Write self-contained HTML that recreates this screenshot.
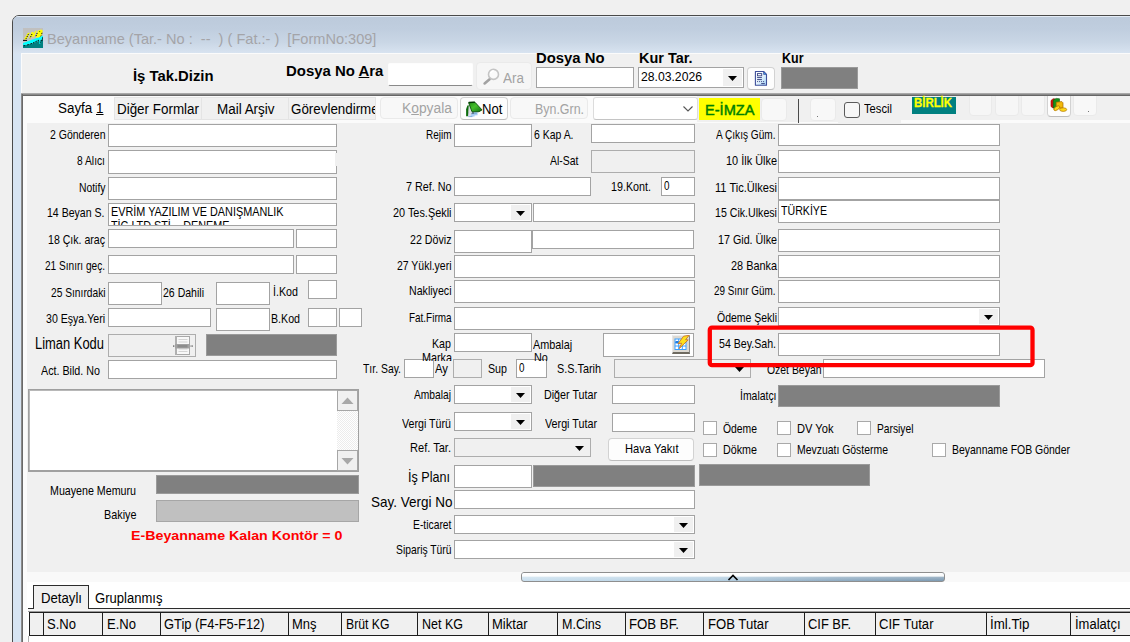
<!DOCTYPE html>
<html lang="tr">
<head>
<meta charset="utf-8">
<title>Beyanname</title>
<style>
html,body{margin:0;padding:0;}
body{width:1130px;height:642px;overflow:hidden;background:#f0f0f0;position:relative;font-family:"Liberation Sans",sans-serif;color:#000;}
div,span{box-sizing:border-box;}
.a,.i,.d,.g,.g2,.m,.fb,.wb,.ta,.cb,.t{position:absolute;}
.t{white-space:pre;transform-origin:0 0;display:block;}
.i{background:#fff;border:1px solid #a3a3a3;}
.d{background:#f0f0f0;border:1px solid #adadad;}
.g{background:#808080;border:1px solid #9a9a9a;}
.g2{background:#c0c0c0;border:1px solid #a6a6a6;}
.m{background:#fff;border:1px solid #fdfdfd;border-bottom:1px solid #8a8a8a;border-radius:2px;}
.fb{background:#f6f6f6;border:1px solid #eaeaea;border-radius:4px;}
.wb{background:#fdfdfd;border:1px solid #d2d2d2;border-bottom-color:#bdbdbd;border-radius:4px;}
.ta{background:#fff;border:1px solid #a0a0a0;border-bottom-width:2px;box-shadow:inset 1px 1px 0 #b8b8b8;}
.cb{background:#fff;border:1px solid #a9a9a9;}
.ab{position:absolute;right:1px;top:1px;bottom:1px;width:19px;background:#f0f0f0;}
.ab svg{position:absolute;left:5px;top:50%;margin-top:-2px;}
.tab{position:absolute;top:97px;height:23px;background:#f0f0f0;border:1px solid #e4e4e4;}
.hc{position:absolute;top:611px;height:25px;background:#f0f0f0;border:1px solid #222;border-left-width:1px;}
</style>
</head>
<body>
<!-- window chrome -->
<div class="a" style="left:12px;top:15px;width:1130px;height:640px;border:1px solid #4a4a4a;border-radius:7px 0 0 0;background:#d7e4f2;overflow:hidden;">
  <div class="a" style="left:0;top:0;width:1130px;height:38px;background:linear-gradient(#bccadb 0%,#c0cedf 35%,#c9d6e5 68%,#d9e4f1 100%);"></div>
  <div class="a" style="left:0;top:0;width:1130px;height:1px;background:#e4ecf6;"></div>
</div>
<!-- app icon -->
<svg class="a" style="left:23px;top:28px" width="20" height="20" viewBox="0 0 20 20">
  <rect width="20" height="20" fill="#c0c0c0"/>
  <path d="M0 17 L5 16.4 11 14.8 17 12.3 20 10.5 V20 H0z" fill="#008080"/>
  <path d="M0 15 L20 7.7 V10.5 L17 12.3 11 14.8 5 16.4 0 17z" fill="#00ffff"/>
  <path d="M16.4 11.5h.8v4.6h-.8z" fill="#00ffff"/>
  <path d="M1 11.6L4.6 5.2l2.2-.6L3.4 11.4zM5.8 10.6L8.6 4.2l1.8-.5.3 2.2 1.6-3 1.4-.3L11 9l-1.4.5-.4-2.6-1.6 3.4zM12.6 9.2l2.4-6.4 3-1.2 1.6.6-.2 2.2-1.2 3.6-2.6 1.6z" fill="#ffff00"/>
  <path d="M0 12.4h4" stroke="#000" stroke-width="1"/>
  <path d="M5.4 6.2L3 10.8M9 6L7 10.2M14.2 5l-1.6 4M17 3.2l-.6.6M19 4.8l-.4 1.4M18.4 7.4l-1 .8" stroke="#000" stroke-width="1" stroke-dasharray="1.1 1" fill="none"/>
  <path d="M.8 17.8l1-.2M4.2 16.9l1.6-.4M7.4 15.9l1.5-.5M10 14.9l1.5-.6M12.4 13.7l1.5-.6M14.6 12.7l1.4-.5" stroke="#000" stroke-width=".9" fill="none"/>
  <path d="M19.6 9.4c.2 1.5-.6 3.4-2 5" stroke="#000" stroke-width="1" stroke-dasharray="1.4 1" fill="none"/>
</svg>
<!-- client area -->
<div class="a" style="left:21px;top:53px;width:1110px;height:600px;background:#f0f0f0;border-left:1px solid #fbfbfb;border-top:1px solid #fbfbfb;"></div>
<!-- tab control frame -->
<div class="a" style="left:22px;top:93px;width:1110px;height:560px;background:#fbfbfb;"></div>
<div class="a" style="left:21px;top:93px;width:1110px;height:3px;background:linear-gradient(#a9a9a9 0,#a9a9a9 33%,#8a8a8a 33%,#8a8a8a 66%,#666 66%,#666 100%);"></div>
<div class="a" style="left:21px;top:94px;width:2px;height:560px;background:linear-gradient(90deg,#8a8a8a 0,#8a8a8a 50%,#696969 50%);"></div>
<!-- strip right part gray -->
<div class="a" style="left:697px;top:96px;width:141px;height:26px;background:#f0f0f0;"></div>
<div class="a" style="left:901px;top:96px;width:240px;height:24px;background:#f0f0f0;"></div>
<div class="a" style="left:838px;top:96px;width:63px;height:27px;background:#f0f0f0;"></div>
<!-- form panel -->
<div class="a" style="left:27px;top:123px;width:1110px;height:449px;background:#f0f0f0;"></div>
<!-- splitter strip -->
<div class="a" style="left:27px;top:572px;width:1110px;height:10px;background:#f9f9f9;"></div>
<div class="a" style="left:27px;top:582px;width:1110px;height:70px;background:#fff;"></div>
<div class="a" style="left:521px;top:572px;width:424px;height:10px;border:1px solid #8e8e8e;border-radius:3px;background:linear-gradient(90deg,#c9dfee 0%,#b4cfe2 45%,#8eabc2 75%,#7c9ab2 100%);overflow:hidden;">
  <div class="a" style="left:0;top:0;width:100%;height:100%;background:linear-gradient(#fff 0%,rgba(255,255,255,.95) 38%,rgba(255,255,255,.25) 55%,rgba(255,255,255,0) 100%);"></div>
</div>
<svg class="a" style="left:727px;top:574px" width="12" height="7" viewBox="0 0 12 7"><path d="M1.5 6L6 1.5 10.5 6" fill="none" stroke="#000" stroke-width="1.6"/></svg>

<div class="m" style="left:388px;top:63px;width:85px;height:23px;"></div>
<div class="fb" style="left:476px;top:62px;width:56px;height:28px;"></div>
<div class="i" style="left:536px;top:67px;width:98px;height:21px;"></div>
<div class="i" style="left:638px;top:67px;width:106px;height:21px;"><div class="ab"><svg width="9" height="5" viewBox="0 0 9 5"><path d="M0 0h9L4.5 5z" fill="#000"/></svg></div></div>
<div class="wb" style="left:747px;top:67px;width:28px;height:23px;"></div>
<div class="g" style="left:781px;top:67px;width:77px;height:22px;"></div>
<div class="i" style="left:108px;top:124px;width:229px;height:23px;"></div>
<div class="i" style="left:108px;top:150px;width:229px;height:24px;"></div>
<div class="i" style="left:108px;top:177px;width:229px;height:23px;"></div>
<div class="i" style="left:108px;top:203px;width:229px;height:23px;"></div>
<div class="i" style="left:108px;top:360px;width:229px;height:19px;"></div>
<div class="i" style="left:108px;top:229px;width:186px;height:19px;"></div>
<div class="i" style="left:296px;top:229px;width:41px;height:19px;"></div>
<div class="i" style="left:108px;top:255px;width:186px;height:19px;"></div>
<div class="i" style="left:296px;top:255px;width:41px;height:19px;"></div>
<div class="i" style="left:108px;top:282px;width:54px;height:23px;"></div>
<div class="i" style="left:216px;top:282px;width:54px;height:23px;"></div>
<div class="i" style="left:308px;top:280px;width:29px;height:19px;"></div>
<div class="i" style="left:108px;top:308px;width:103px;height:19px;"></div>
<div class="i" style="left:216px;top:308px;width:54px;height:23px;"></div>
<div class="i" style="left:308px;top:308px;width:29px;height:19px;"></div>
<div class="i" style="left:339px;top:308px;width:23px;height:19px;"></div>
<div class="d" style="left:108px;top:334px;width:88px;height:23px;"></div>
<div class="g" style="left:206px;top:334px;width:131px;height:22px;"></div>
<div class="ta" style="left:28px;top:389px;width:331px;height:83px;"></div>
<div class="g" style="left:156px;top:475px;width:203px;height:19px;"></div>
<div class="g2" style="left:156px;top:500px;width:203px;height:22px;"></div>
<div class="i" style="left:454px;top:124px;width:78px;height:23px;"></div>
<div class="i" style="left:591px;top:124px;width:104px;height:19px;"></div>
<div class="d" style="left:591px;top:150px;width:104px;height:23px;"></div>
<div class="i" style="left:454px;top:177px;width:137px;height:19px;"></div>
<div class="i" style="left:661px;top:177px;width:34px;height:19px;"></div>
<div class="i" style="left:454px;top:203px;width:78px;height:19px;"><div class="ab"><svg width="9" height="5" viewBox="0 0 9 5"><path d="M0 0h9L4.5 5z" fill="#000"/></svg></div></div>
<div class="i" style="left:533px;top:203px;width:162px;height:19px;"></div>
<div class="i" style="left:532px;top:230px;width:162px;height:19px;"></div>
<div class="i" style="left:454px;top:230px;width:78px;height:23px;"></div>
<div class="i" style="left:454px;top:255px;width:241px;height:23px;"></div>
<div class="i" style="left:454px;top:280px;width:241px;height:23px;"></div>
<div class="i" style="left:454px;top:307px;width:241px;height:23px;"></div>
<div class="i" style="left:454px;top:333px;width:78px;height:19px;"></div>
<div class="i" style="left:603px;top:333px;width:91px;height:24px;"></div>
<div class="i" style="left:404px;top:359px;width:30px;height:19px;"></div>
<div class="d" style="left:453px;top:359px;width:29px;height:19px;"></div>
<div class="i" style="left:516px;top:359px;width:31px;height:19px;"></div>
<div class="d" style="left:614px;top:359px;width:137px;height:19px;"><div class="ab" style="background:transparent"><svg width="9" height="5" viewBox="0 0 9 5"><path d="M0 0h9L4.5 5z" fill="#000"/></svg></div></div>
<div class="i" style="left:454px;top:385px;width:78px;height:19px;"><div class="ab"><svg width="9" height="5" viewBox="0 0 9 5"><path d="M0 0h9L4.5 5z" fill="#000"/></svg></div></div>
<div class="i" style="left:612px;top:385px;width:83px;height:19px;"></div>
<div class="i" style="left:454px;top:412px;width:78px;height:19px;"><div class="ab"><svg width="9" height="5" viewBox="0 0 9 5"><path d="M0 0h9L4.5 5z" fill="#000"/></svg></div></div>
<div class="i" style="left:612px;top:413px;width:83px;height:19px;"></div>
<div class="d" style="left:454px;top:438px;width:137px;height:19px;"><div class="ab" style="background:transparent"><svg width="9" height="5" viewBox="0 0 9 5"><path d="M0 0h9L4.5 5z" fill="#000"/></svg></div></div>
<div class="wb" style="left:608px;top:438px;width:86px;height:23px;"></div>
<div class="i" style="left:454px;top:465px;width:78px;height:23px;"></div>
<div class="g" style="left:533px;top:465px;width:162px;height:22px;"></div>
<div class="i" style="left:454px;top:490px;width:241px;height:19px;"></div>
<div class="i" style="left:454px;top:515px;width:241px;height:19px;"><div class="ab"><svg width="9" height="5" viewBox="0 0 9 5"><path d="M0 0h9L4.5 5z" fill="#000"/></svg></div></div>
<div class="i" style="left:454px;top:540px;width:241px;height:19px;"><div class="ab"><svg width="9" height="5" viewBox="0 0 9 5"><path d="M0 0h9L4.5 5z" fill="#000"/></svg></div></div>
<div class="i" style="left:778px;top:124px;width:222px;height:22px;"></div>
<div class="i" style="left:778px;top:150px;width:222px;height:23px;"></div>
<div class="i" style="left:778px;top:177px;width:222px;height:23px;"></div>
<div class="i" style="left:778px;top:200px;width:222px;height:23px;"></div>
<div class="i" style="left:778px;top:229px;width:222px;height:23px;"></div>
<div class="i" style="left:778px;top:255px;width:222px;height:23px;"></div>
<div class="i" style="left:778px;top:280px;width:222px;height:23px;"></div>
<div class="i" style="left:778px;top:333px;width:222px;height:23px;"></div>
<div class="i" style="left:778px;top:307px;width:222px;height:19px;"><div class="ab"><svg width="9" height="5" viewBox="0 0 9 5"><path d="M0 0h9L4.5 5z" fill="#000"/></svg></div></div>
<div class="i" style="left:823px;top:359px;width:222px;height:19px;"></div>
<div class="g" style="left:778px;top:385px;width:222px;height:22px;"></div>
<div class="cb" style="left:703px;top:421px;width:14px;height:14px;"></div>
<div class="cb" style="left:777px;top:421px;width:14px;height:14px;"></div>
<div class="cb" style="left:857px;top:421px;width:14px;height:14px;"></div>
<div class="cb" style="left:703px;top:443px;width:14px;height:14px;"></div>
<div class="cb" style="left:777px;top:443px;width:14px;height:14px;"></div>
<div class="cb" style="left:932px;top:443px;width:14px;height:14px;"></div>
<div class="g" style="left:699px;top:464px;width:171px;height:22px;"></div>
<!-- strip tabs & buttons -->
<div class="tab" style="left:114px;width:88px;"></div>
<div class="tab" style="left:201px;width:88px;"></div>
<div class="tab" style="left:288px;width:88px;overflow:hidden;"><span class="a" style="left:1.8px;top:4px;font-size:14px;line-height:14px;white-space:pre;transform:scaleX(.955);transform-origin:0 0;">Görevlendirme</span></div>
<div class="fb" style="left:380px;top:97px;width:78px;height:22px;background:#f8f8f8;"></div>
<div class="wb" style="left:460px;top:97px;width:48px;height:23px;"></div>
<div class="fb" style="left:510px;top:97px;width:78px;height:22px;background:#f8f8f8;"></div>
<div class="a" style="left:593px;top:97px;width:105px;height:23px;background:#fff;border:1px solid #dcdcdc;border-bottom-color:#c4c4c4;border-radius:3px;"></div>
<svg class="a" style="left:682px;top:105px" width="12" height="8" viewBox="0 0 12 8"><path d="M1.5 1.5L6 6 10.5 1.5" fill="none" stroke="#555" stroke-width="1.1"/></svg>
<div class="a" style="left:699px;top:98px;width:61px;height:22px;background:#ffff00;"></div>
<div class="fb" style="left:761px;top:98px;width:26px;height:23px;background:#f8f8f8;"></div>
<div class="a" style="left:798px;top:99px;width:1px;height:24px;background:#4a4a4a;"></div>
<div class="fb" style="left:810px;top:98px;width:26px;height:23px;background:#f8f8f8;"></div>
<div class="a" style="left:817px;top:116px;width:1px;height:1px;background:#777;"></div>
<div class="a" style="left:844px;top:102px;width:16px;height:16px;background:#f6f6f6;border:1px solid #5a5a5a;border-radius:3px;"></div>
<div class="a" style="left:912px;top:97px;width:44px;height:17px;background:#008080;"></div>
<div class="fb" style="left:969px;top:92px;width:23px;height:24px;background:#f6f6f6;"></div>
<div class="fb" style="left:995px;top:92px;width:24px;height:24px;background:#f6f6f6;"></div>
<div class="fb" style="left:1021px;top:92px;width:24px;height:24px;background:#f6f6f6;"></div>
<div class="wb" style="left:1047px;top:92px;width:24px;height:25px;"></div>
<div class="fb" style="left:1073px;top:92px;width:24px;height:24px;background:#f8f8f8;"></div>
<div class="a" style="left:1088px;top:111px;width:1px;height:1px;background:#777;"></div>
<!-- redraw dark line over clipped buttons -->
<div class="a" style="left:900px;top:92px;width:240px;height:1px;background:#f0f0f0;"></div>
<div class="a" style="left:900px;top:93px;width:240px;height:3px;background:linear-gradient(#a9a9a9 0,#a9a9a9 33%,#8a8a8a 33%,#8a8a8a 66%,#666 66%,#666 100%);"></div>

<!-- icons in strip -->
<!-- magnifier -->
<svg class="a" style="left:482px;top:66px" width="20" height="20" viewBox="0 0 20 20">
  <path d="M7.6 13.2L2.6 17.4" stroke="#a2a2a2" stroke-width="2.6" stroke-linecap="round"/>
  <circle cx="11.5" cy="8.4" r="5" fill="#fafafa" stroke="#c4c4c4" stroke-width="1.6"/>
  <path d="M8.6 7.2a3.4 3.4 0 0 1 3.2-2.4" stroke="#fff" stroke-width="1.4" fill="none"/>
</svg>
<!-- Not icon -->
<svg class="a" style="left:465px;top:101px" width="18" height="17" viewBox="0 0 18 17">
  <defs><linearGradient id="ng" x1="0" y1="0" x2="1" y2="1"><stop offset="0" stop-color="#1d8a14"/><stop offset=".45" stop-color="#46c02c"/><stop offset="1" stop-color="#0d6f10"/></linearGradient></defs>
  <path d="M3 11.2l9.6-.6v3.6l-3 .4v.8L3.4 16z" fill="#a9cdf3"/>
  <path d="M5.2 12.6h6.6M3.4 15.6h4" stroke="#6f9fd2" stroke-width=".8"/>
  <path d="M6.6 12h2.4" stroke="#3d3d3d" stroke-width=".9"/>
  <path d="M4.3 4.6L3.2 15.2h2.2l1.3-4z" fill="#dedee6"/>
  <path d="M4.3 4.6L3.2 15.2" stroke="#b8b8c2" stroke-width=".6"/>
  <path d="M1.1 8.2l1.3-3.6 1.4-.4-.9 11H1.1z" fill="#0b6b0b"/>
  <path d="M3.6 1.6l6.4-.3 7 7.6-3 1.8-7 .1z" fill="url(#ng)" stroke="#064d06" stroke-width=".9" stroke-linejoin="round"/>
  <path d="M3.8 1.5l6-.3" stroke="#033803" stroke-width="1.3"/>
</svg>
<!-- doc icon -->
<svg class="a" style="left:754px;top:70px" width="14" height="17" viewBox="0 0 14 17">
  <defs><linearGradient id="dg" x1="0" y1="0" x2="1" y2="1"><stop offset="0" stop-color="#ffffff"/><stop offset=".45" stop-color="#eaf5fd"/><stop offset="1" stop-color="#9fd2f6"/></linearGradient></defs>
  <path d="M1.4 1.5h8.2l2.9 2.9v10.9H1.4z" fill="url(#dg)" stroke="#3f4f9a" stroke-width="1.1" stroke-linejoin="round"/>
  <path d="M9.6 1.5v2.9h2.9z" fill="#3a9cf0" stroke="#3f4f9a" stroke-width=".7"/>
  <rect x="3.5" y="3.6" width="4.2" height="2.2" fill="#fff" stroke="#3b4684" stroke-width=".9"/>
  <path d="M3.1 7.6h4.8M3.1 9.6h4.8M7.2 13.6h3.6" stroke="#3b4684" stroke-width="1"/>
  <path d="M3.1 11.6h7" stroke="#3b4684" stroke-width="1" stroke-dasharray="1 1"/>
</svg>
<!-- coins icon -->
<svg class="a" style="left:1050px;top:97px" width="18" height="16" viewBox="0 0 18 16">
  <path d="M1 3.5l2.2-1.8 2 .3v8.5L3 11 1 9.5z" fill="#e01010" stroke="#900" stroke-width=".6"/>
  <path d="M3.2 3l3-1.6 3.3.4v8.8L6 12.4l-2.8-1.6z" fill="#14921a" stroke="#0a5a0e" stroke-width=".6"/>
  <path d="M6.2 5.2l5.6-.6 1.2 1.2v5l-4 .4-2.8-.4z" fill="#f2b90c" stroke="#a86a00" stroke-width=".7"/>
  <ellipse cx="6.8" cy="11.2" rx="3.4" ry="1.7" transform="rotate(-32 6.8 11.2)" fill="#ffd91a" stroke="#b07400" stroke-width=".7"/>
  <ellipse cx="13.2" cy="12.6" rx="3.5" ry="1.8" fill="#ffd91a" stroke="#b07400" stroke-width=".7"/>
</svg>


<div class="a" style="left:335px;top:153px;width:3px;height:13px;background:#f0f0f0;"></div>
<!-- Liman Kodu icon -->
<svg class="a" style="left:172px;top:336px" width="22" height="19" viewBox="0 0 22 19">
  <rect x="3.5" y=".5" width="14" height="18" fill="#f8f8f8" stroke="#a8a8a8"/>
  <rect x="3" y="0" width="2" height="19" fill="#b0b0b0"/>
  <path d="M6.5 3.5h9M6.5 6h9M6.5 13h9M6.5 15.5h9" stroke="#d4d4d4" stroke-width="1"/>
  <rect x="3" y="8" width="15" height="4.5" fill="#a2a2a2"/>
  <rect x="5.5" y="9" width="10" height="2.5" fill="#8c8c8c"/>
  <rect x="1" y="9.3" width="1.4" height="1.6" fill="#777"/><rect x="19.4" y="9.3" width="1.4" height="1.6" fill="#777"/>
  <rect x="18" y="9.3" width="1.4" height="1.6" fill="#bbb"/>
</svg>
<!-- textarea scrollbar -->
<div class="a" style="left:337px;top:390px;width:21px;height:81px;background:#f9f9f9;background-image:repeating-conic-gradient(#ececec 0 25%,#fff 0 50%);background-size:2px 2px;"></div>
<div class="a" style="left:337px;top:390px;width:21px;height:21px;background:#f0f0f0;border:1px solid #a6a6a6;"></div>
<div class="a" style="left:337px;top:450px;width:21px;height:21px;background:#f0f0f0;border:1px solid #a6a6a6;"></div>
<svg class="a" style="left:341px;top:397px" width="13" height="7" viewBox="0 0 13 7"><path d="M0.5 7L6.5 0.5 12.5 7z" fill="#a8a8a8"/></svg>
<svg class="a" style="left:341px;top:458px" width="13" height="7" viewBox="0 0 13 7"><path d="M0.5 0L6.5 6.5 12.5 0z" fill="#a8a8a8"/></svg>
<!-- lightning button -->
<div class="a" style="left:672px;top:335px;width:18px;height:19px;background:#dcd9d2;border-top:1px solid #eeeeee;border-left:1px solid #e6e6e6;border-right:1px solid #8a8a8a;border-bottom:2px solid #6e6a60;"></div>
<svg class="a" style="left:673px;top:335px" width="17" height="17" viewBox="0 0 17 17">
  <rect x="2" y="4" width="11" height="10.5" fill="#fff" stroke="#3aa0ff" stroke-width="1"/>
  <path d="M2 7.6h11M2 11h11M5.7 4v10.5M9.3 4v10.5" stroke="#3aa0ff" stroke-width="1"/>
  <rect x="2.5" y="6" width="3" height="2.4" fill="#1e7be0"/>
  <path d="M10.6 1.2l5.6-.9-3.6 4.4 2.6.2L6.2 13.6l2.4-5.4-3.6.5z" fill="#ffe11a" stroke="#c8742a" stroke-width=".9" stroke-linejoin="round"/>
</svg>
<!-- clipped second lines -->
<div class="a" style="left:109px;top:218px;width:226px;height:7px;overflow:hidden;"><span class="a" style="left:1.5px;top:1px;font-size:13px;line-height:13px;white-space:pre;transform:scaleX(.83);transform-origin:0 0;">TİC.LTD.ŞTİ. - DENEME</span></div>
<div class="a" style="left:415px;top:351px;width:40px;height:10px;overflow:hidden;"><span class="a" style="left:6.5px;top:0px;font-size:13px;line-height:13px;white-space:pre;transform:scaleX(.83);transform-origin:0 0;">Marka</span></div>
<div class="a" style="left:533px;top:351px;width:30px;height:10px;overflow:hidden;"><span class="a" style="left:0.5px;top:0px;font-size:13px;line-height:13px;white-space:pre;transform:scaleX(.83);transform-origin:0 0;">No</span></div>
<span class="t" style="left:533px;top:337.5px;font-size:13px;line-height:13px;transform:scaleX(.835);">Ambalaj</span>

<!-- grid tabs -->
<div class="a" style="left:28px;top:608px;width:1110px;height:1px;background:#2c2c2c;"></div>
<div class="a" style="left:28px;top:609px;width:1110px;height:3px;background:#f3f3f3;"></div>
<div class="a" style="left:33px;top:585px;width:56px;height:24px;background:#f0f0f0;border:1px solid #2c2c2c;border-bottom:none;"></div>
<!-- grid header -->
<div class="a" style="left:29px;top:612px;width:1110px;height:24px;background:#f0f0f0;border-top:1px solid #1e1e1e;border-bottom:1px solid #1e1e1e;border-left:1px solid #1e1e1e;"></div>
<div class="a" style="left:28px;top:611px;width:1110px;height:1px;background:#9a9a9a;"></div>
<div class="a" style="left:43px;top:613px;width:1px;height:22px;background:#1e1e1e;"></div><div class="a" style="left:102px;top:613px;width:1px;height:22px;background:#1e1e1e;"></div><div class="a" style="left:160px;top:613px;width:1px;height:22px;background:#1e1e1e;"></div><div class="a" style="left:288px;top:613px;width:1px;height:22px;background:#1e1e1e;"></div><div class="a" style="left:341px;top:613px;width:1px;height:22px;background:#1e1e1e;"></div><div class="a" style="left:417px;top:613px;width:1px;height:22px;background:#1e1e1e;"></div><div class="a" style="left:488px;top:613px;width:1px;height:22px;background:#1e1e1e;"></div><div class="a" style="left:557px;top:613px;width:1px;height:22px;background:#1e1e1e;"></div><div class="a" style="left:625px;top:613px;width:1px;height:22px;background:#1e1e1e;"></div><div class="a" style="left:703px;top:613px;width:1px;height:22px;background:#1e1e1e;"></div><div class="a" style="left:804px;top:613px;width:1px;height:22px;background:#1e1e1e;"></div><div class="a" style="left:875px;top:613px;width:1px;height:22px;background:#1e1e1e;"></div><div class="a" style="left:986px;top:613px;width:1px;height:22px;background:#1e1e1e;"></div><div class="a" style="left:1070px;top:613px;width:1px;height:22px;background:#1e1e1e;"></div>
<div class="a" style="left:27px;top:636px;width:1110px;height:10px;background:#fff;"></div>
<div class="a" style="left:28px;top:636px;width:1px;height:10px;background:#b0b0b0;"></div>

<span class="t" style="left:49.5px;top:128.1px;font-size:13px;line-height:13px;transform:scaleX(0.808);">2 Gönderen</span>
<span class="t" style="left:77.0px;top:153.7px;font-size:13px;line-height:13px;transform:scaleX(0.790);">8 Alıcı</span>
<span class="t" style="left:78.5px;top:180.7px;font-size:13px;line-height:13px;transform:scaleX(0.797);">Notify</span>
<span class="t" style="left:47.0px;top:206.2px;font-size:13px;line-height:13px;transform:scaleX(0.812);">14 Beyan S.</span>
<span class="t" style="left:48.0px;top:232.7px;font-size:13px;line-height:13px;transform:scaleX(0.813);">18 Çık. araç</span>
<span class="t" style="left:44.5px;top:258.7px;font-size:13px;line-height:13px;transform:scaleX(0.776);">21 Sınırı geç.</span>
<span class="t" style="left:50.5px;top:285.7px;font-size:13px;line-height:13px;transform:scaleX(0.786);">25 Sınırdaki</span>
<span class="t" style="left:163.0px;top:285.7px;font-size:13px;line-height:13px;transform:scaleX(0.810);">26 Dahili</span>
<span class="t" style="left:273.0px;top:284.7px;font-size:13px;line-height:13px;transform:scaleX(0.823);">İ.Kod</span>
<span class="t" style="left:46.0px;top:311.7px;font-size:13px;line-height:13px;transform:scaleX(0.814);">30 Eşya.Yeri</span>
<span class="t" style="left:271.0px;top:311.7px;font-size:13px;line-height:13px;transform:scaleX(0.819);">B.Kod</span>
<span class="t" style="left:35.0px;top:335.8px;font-size:16px;line-height:16px;transform:scaleX(0.808);">Liman Kodu</span>
<span class="t" style="left:41.0px;top:363.7px;font-size:13px;line-height:13px;transform:scaleX(0.825);">Act. Bild. No</span>
<span class="t" style="left:50.0px;top:483.7px;font-size:13px;line-height:13px;transform:scaleX(0.821);">Muayene Memuru</span>
<span class="t" style="left:103.5px;top:507.7px;font-size:13px;line-height:13px;transform:scaleX(0.833);">Bakiye</span>
<span class="t" style="left:425.5px;top:127.7px;font-size:13px;line-height:13px;transform:scaleX(0.767);">Rejim</span>
<span class="t" style="left:533.5px;top:127.7px;font-size:13px;line-height:13px;transform:scaleX(0.804);">6 Kap A.</span>
<span class="t" style="left:549.5px;top:153.7px;font-size:13px;line-height:13px;transform:scaleX(0.805);">Al-Sat</span>
<span class="t" style="left:405.5px;top:180.2px;font-size:13px;line-height:13px;transform:scaleX(0.828);">7 Ref. No</span>
<span class="t" style="left:611.0px;top:180.2px;font-size:13px;line-height:13px;transform:scaleX(0.826);">19.Kont.</span>
<span class="t" style="left:392.5px;top:206.2px;font-size:13px;line-height:13px;transform:scaleX(0.837);">20 Tes.Şekli</span>
<span class="t" style="left:409.5px;top:232.7px;font-size:13px;line-height:13px;transform:scaleX(0.821);">22 Döviz</span>
<span class="t" style="left:396.5px;top:258.7px;font-size:13px;line-height:13px;transform:scaleX(0.805);">27 Yükl.yeri</span>
<span class="t" style="left:408.5px;top:283.7px;font-size:13px;line-height:13px;transform:scaleX(0.817);">Nakliyeci</span>
<span class="t" style="left:408.5px;top:310.7px;font-size:13px;line-height:13px;transform:scaleX(0.764);">Fat.Firma</span>
<span class="t" style="left:432.0px;top:336.7px;font-size:13px;line-height:13px;transform:scaleX(0.821);">Kap</span>
<span class="t" style="left:363.0px;top:362.2px;font-size:13px;line-height:13px;transform:scaleX(0.801);">Tır. Say.</span>
<span class="t" style="left:435.0px;top:362.2px;font-size:13px;line-height:13px;transform:scaleX(0.870);">Ay</span>
<span class="t" style="left:487.5px;top:362.2px;font-size:13px;line-height:13px;transform:scaleX(0.821);">Sup</span>
<span class="t" style="left:556.5px;top:362.2px;font-size:13px;line-height:13px;transform:scaleX(0.834);">S.S.Tarih</span>
<span class="t" style="left:414.0px;top:388.2px;font-size:13px;line-height:13px;transform:scaleX(0.788);">Ambalaj</span>
<span class="t" style="left:543.5px;top:388.2px;font-size:13px;line-height:13px;transform:scaleX(0.824);">Diğer Tutar</span>
<span class="t" style="left:402.0px;top:416.6px;font-size:13px;line-height:13px;transform:scaleX(0.820);">Vergi Türü</span>
<span class="t" style="left:545.0px;top:416.6px;font-size:13px;line-height:13px;transform:scaleX(0.827);">Vergi Tutar</span>
<span class="t" style="left:409.5px;top:440.7px;font-size:13px;line-height:13px;transform:scaleX(0.851);">Ref. Tar.</span>
<span class="t" style="left:408.0px;top:469.2px;font-size:15px;line-height:15px;transform:scaleX(0.839);">İş Planı</span>
<span class="t" style="left:370.5px;top:494.2px;font-size:15px;line-height:15px;transform:scaleX(0.899);">Say. Vergi No</span>
<span class="t" style="left:412.5px;top:517.7px;font-size:13px;line-height:13px;transform:scaleX(0.795);">E-ticaret</span>
<span class="t" style="left:395.5px;top:542.7px;font-size:13px;line-height:13px;transform:scaleX(0.795);">Sipariş Türü</span>
<span class="t" style="left:716.0px;top:127.7px;font-size:13px;line-height:13px;transform:scaleX(0.777);">A Çıkış Güm.</span>
<span class="t" style="left:725.5px;top:153.7px;font-size:13px;line-height:13px;transform:scaleX(0.840);">10 İlk Ülke</span>
<span class="t" style="left:714.5px;top:180.7px;font-size:13px;line-height:13px;transform:scaleX(0.852);">11 Tic.Ülkesi</span>
<span class="t" style="left:714.5px;top:206.2px;font-size:13px;line-height:13px;transform:scaleX(0.817);">15 Cik.Ulkesi</span>
<span class="t" style="left:717.5px;top:232.7px;font-size:13px;line-height:13px;transform:scaleX(0.825);">17 Gid. Ülke</span>
<span class="t" style="left:730.5px;top:258.7px;font-size:13px;line-height:13px;transform:scaleX(0.837);">28 Banka</span>
<span class="t" style="left:714.0px;top:283.7px;font-size:13px;line-height:13px;transform:scaleX(0.760);">29 Sınır Güm.</span>
<span class="t" style="left:716.5px;top:310.7px;font-size:13px;line-height:13px;transform:scaleX(0.806);">Ödeme Şekli</span>
<span class="t" style="left:718.5px;top:336.7px;font-size:13px;line-height:13px;transform:scaleX(0.816);">54 Bey.Sah.</span>
<span class="t" style="left:766.5px;top:363.2px;font-size:13px;line-height:13px;transform:scaleX(0.802);">Özet Beyan</span>
<span class="t" style="left:740.0px;top:389.2px;font-size:13px;line-height:13px;transform:scaleX(0.802);">İmalatçı</span>
<span class="t" style="left:722.5px;top:421.7px;font-size:13px;line-height:13px;transform:scaleX(0.797);">Ödeme</span>
<span class="t" style="left:796.5px;top:421.7px;font-size:13px;line-height:13px;transform:scaleX(0.856);">DV Yok</span>
<span class="t" style="left:876.5px;top:421.7px;font-size:13px;line-height:13px;transform:scaleX(0.789);">Parsiyel</span>
<span class="t" style="left:722.5px;top:442.7px;font-size:13px;line-height:13px;transform:scaleX(0.825);">Dökme</span>
<span class="t" style="left:796.5px;top:442.7px;font-size:13px;line-height:13px;transform:scaleX(0.802);">Mevzuatı Gösterme</span>
<span class="t" style="left:951.5px;top:442.7px;font-size:13px;line-height:13px;transform:scaleX(0.804);">Beyanname FOB Gönder</span>
<span class="t" style="left:864.0px;top:102.2px;font-size:13px;line-height:13px;transform:scaleX(0.861);">Tescil</span>
<span class="t" style="left:110.5px;top:204.7px;font-size:13px;line-height:13px;transform:scaleX(0.834);">EVRİM YAZILIM VE DANIŞMANLIK</span>
<span class="t" style="left:780.5px;top:203.7px;font-size:13px;line-height:13px;transform:scaleX(0.816);">TÜRKİYE</span>
<span class="t" style="left:663.5px;top:178.7px;font-size:13px;line-height:13px;transform:scaleX(0.760);">0</span>
<span class="t" style="left:518.5px;top:360.7px;font-size:13px;line-height:13px;transform:scaleX(0.760);">0</span>
<span class="t" style="left:640.5px;top:70.2px;font-size:13px;line-height:13px;transform:scaleX(0.937);">28.03.2026</span>
<span class="t" style="left:133.0px;top:68.9px;font-size:14px;line-height:14px;transform:scaleX(1.059);font-weight:bold;">İş Tak.Dizin</span>
<span class="t" style="left:285.6px;top:64.0px;font-size:14px;line-height:14px;transform:scaleX(1.067);font-weight:bold;">Dosya No <u>A</u>ra</span>
<span class="t" style="left:536.0px;top:51.2px;font-size:14px;line-height:14px;transform:scaleX(1.061);font-weight:bold;">Dosya No</span>
<span class="t" style="left:639.0px;top:51.2px;font-size:14px;line-height:14px;transform:scaleX(1.033);font-weight:bold;">Kur Tar.</span>
<span class="t" style="left:781.5px;top:51.2px;font-size:14px;line-height:14px;transform:scaleX(0.891);font-weight:bold;">Kur</span>
<span class="t" style="left:58.0px;top:101.2px;font-size:14px;line-height:14px;transform:scaleX(0.958);">Sayfa <u>1</u></span>
<span class="t" style="left:116.5px;top:102.2px;font-size:14px;line-height:14px;transform:scaleX(0.958);">Diğer Formlar</span>
<span class="t" style="left:216.5px;top:102.2px;font-size:14px;line-height:14px;transform:scaleX(0.960);">Mail Arşiv</span>
<span class="t" style="left:401.5px;top:100.7px;font-size:14px;line-height:14px;transform:scaleX(0.986);color:#a3a3a3;">K<u>o</u>pyala</span>
<span class="t" style="left:482.4px;top:102.2px;font-size:14px;line-height:14px;transform:scaleX(0.936);">Not</span>
<span class="t" style="left:534.5px;top:102.2px;font-size:14px;line-height:14px;transform:scaleX(0.887);color:#a3a3a3;">Byn.Grn.</span>
<span class="t" style="left:503.0px;top:70.7px;font-size:14px;line-height:14px;transform:scaleX(0.963);color:#a3a3a3;">Ara</span>
<span class="t" style="left:704.5px;top:101.7px;font-size:15px;line-height:15px;transform:scaleX(0.974);color:#008000;-webkit-text-stroke:0.45px #008000;">E-İMZA</span>
<span class="t" style="left:913.5px;top:96.2px;font-size:13px;line-height:13px;transform:scaleX(0.877);font-weight:bold;color:#ffff00;-webkit-text-stroke:0.3px #ffff00;">BİRLİK</span>
<span class="t" style="left:46.6px;top:31.3px;font-size:15px;line-height:15px;transform:scaleX(0.971);color:#a4a4a8;white-space:pre;">Beyanname (Tar.- No :  --  ) ( Fat.:- )  [FormNo:309]</span>
<span class="t" style="left:40.5px;top:591.2px;font-size:14px;line-height:14px;transform:scaleX(0.941);">Detaylı</span>
<span class="t" style="left:95.0px;top:591.2px;font-size:14px;line-height:14px;transform:scaleX(0.933);">Gruplanmış</span>
<span class="t" style="left:47.0px;top:616.7px;font-size:14px;line-height:14px;transform:scaleX(0.932);">S.No</span>
<span class="t" style="left:106.5px;top:616.7px;font-size:14px;line-height:14px;transform:scaleX(0.932);">E.No</span>
<span class="t" style="left:164.0px;top:616.7px;font-size:14px;line-height:14px;transform:scaleX(0.921);">GTip (F4-F5-F12)</span>
<span class="t" style="left:292.0px;top:616.7px;font-size:14px;line-height:14px;transform:scaleX(0.926);">Mnş</span>
<span class="t" style="left:345.5px;top:616.7px;font-size:14px;line-height:14px;transform:scaleX(0.874);">Brüt KG</span>
<span class="t" style="left:421.5px;top:616.7px;font-size:14px;line-height:14px;transform:scaleX(0.893);">Net KG</span>
<span class="t" style="left:492.0px;top:616.7px;font-size:14px;line-height:14px;transform:scaleX(0.931);">Miktar</span>
<span class="t" style="left:561.5px;top:616.7px;font-size:14px;line-height:14px;transform:scaleX(0.895);">M.Cins</span>
<span class="t" style="left:629.0px;top:616.7px;font-size:14px;line-height:14px;transform:scaleX(0.945);">FOB BF.</span>
<span class="t" style="left:707.5px;top:616.7px;font-size:14px;line-height:14px;transform:scaleX(0.937);">FOB Tutar</span>
<span class="t" style="left:808.0px;top:616.7px;font-size:14px;line-height:14px;transform:scaleX(0.921);">CIF BF.</span>
<span class="t" style="left:879.0px;top:616.7px;font-size:14px;line-height:14px;transform:scaleX(0.934);">CIF Tutar</span>
<span class="t" style="left:990.0px;top:616.7px;font-size:14px;line-height:14px;transform:scaleX(0.952);">İml.Tip</span>
<span class="t" style="left:1074.5px;top:616.7px;font-size:14px;line-height:14px;transform:scaleX(0.928);">İmalatçı</span>
<span class="t" style="left:130.5px;top:528.7px;font-size:13px;line-height:13px;transform:scaleX(1.094);font-weight:bold;color:#ff0000;">E-Beyanname Kalan Kontör = 0</span>
<span class="t" style="left:625.0px;top:442.2px;font-size:13px;line-height:13px;transform:scaleX(0.858);">Hava Yakıt</span>

<!-- red highlight -->
<svg class="a" style="left:700px;top:320px" width="340" height="52" viewBox="0 0 340 52"><rect x="9.8" y="7.7" width="322.7" height="37.4" rx="2.2" fill="none" stroke="#ff0000" stroke-width="4.3"/></svg>
</body>
</html>
